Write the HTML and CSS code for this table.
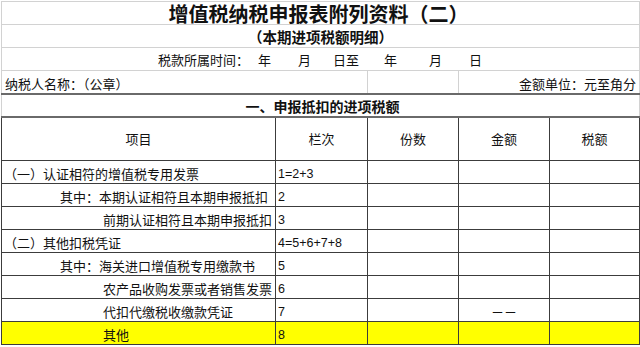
FILE: index.html
```html
<!DOCTYPE html>
<html lang="zh-CN">
<head>
<meta charset="utf-8">
<title>增值税纳税申报表附列资料（二）</title>
<link rel="stylesheet" href="styles.css">
</head>
<body>
<table class="sheet">
  <colgroup>
    <col class="c1"><col class="c2"><col class="c3"><col class="c4"><col class="c5">
  </colgroup>
  <tr class="top title"><td colspan="5">增值税纳税申报表附列资料（二）</td></tr>
  <tr class="top sub"><td colspan="5">（本期进项税额明细）</td></tr>
  <tr class="top period">
    <td colspan="5">
      <div class="period-line">
        <span class="p-label">税款所属时间：</span>
        <span class="p-y1">年</span>
        <span class="p-m1">月</span>
        <span class="p-d1">日至</span>
        <span class="p-y2">年</span>
        <span class="p-m2">月</span>
        <span class="p-d2">日</span>
      </div>
    </td>
  </tr>
  <tr class="top meta">
    <td colspan="2" class="left">纳税人名称：（公章）</td>
    <td></td>
    <td colspan="2" class="right">金额单位：元至角分</td>
  </tr>
  <tr class="section"><td colspan="5">一、申报抵扣的进项税额</td></tr>
  <tr class="head">
    <td>项目</td><td>栏次</td><td>份数</td><td>金额</td><td>税额</td>
  </tr>
  <tr class="row">
    <td class="item l1">（一）认证相符的增值税专用发票</td><td class="num">1=2+3</td><td></td><td></td><td></td>
  </tr>
  <tr class="row">
    <td class="item l2">其中：本期认证相符且本期申报抵扣</td><td class="num">2</td><td></td><td></td><td></td>
  </tr>
  <tr class="row">
    <td class="item l3">前期认证相符且本期申报抵扣</td><td class="num">3</td><td></td><td></td><td></td>
  </tr>
  <tr class="row">
    <td class="item l1">（二）其他扣税凭证</td><td class="num">4=5+6+7+8</td><td></td><td></td><td></td>
  </tr>
  <tr class="row">
    <td class="item l2">其中：海关进口增值税专用缴款书</td><td class="num">5</td><td></td><td></td><td></td>
  </tr>
  <tr class="row">
    <td class="item l3">农产品收购发票或者销售发票</td><td class="num">6</td><td></td><td></td><td></td>
  </tr>
  <tr class="row">
    <td class="item l3">代扣代缴税收缴款凭证</td><td class="num">7</td><td></td><td class="dash">－－</td><td></td>
  </tr>
  <tr class="row hl">
    <td class="item l3">其他</td><td class="num">8</td><td></td><td></td><td></td>
  </tr>
</table>
</body>
</html>
```

FILE: styles.css
```css
html, body {
  margin: 0;
  padding: 0;
  background: #ffffff;
}

body {
  padding: 1px 0 0 1px;
  font-family: "Noto Sans CJK SC", "Noto Sans", sans-serif;
  color: #111;
}

.sheet {
  border-collapse: collapse;
  table-layout: fixed;
  width: 638px;
}

.c1 { width: 274px; }
.c2 { width: 92px; }
.c3 { width: 91px; }
.c4 { width: 91px; }
.c5 { width: 90px; }

.sheet td {
  padding: 0;
  line-height: 13px;
  white-space: nowrap;
  overflow: hidden;
  vertical-align: middle;
}

/* upper sheet area with light gridlines */
.top {
  height: 23px;
}

.top td {
  border: 1px solid #d2d2d2;
  font-size: 13px;
}

.title td {
  text-align: center;
  font-size: 20px;
  line-height: 21px;
  font-weight: bold;
  padding-top: 1px;
  padding-right: 4px;
  overflow: visible;
}

.sub td {
  text-align: center;
  font-size: 14.5px;
  line-height: 16px;
  font-weight: bold;
  padding-top: 2px;
  overflow: visible;
}

.period-line {
  display: flex;
  padding-left: 156px;
  padding-top: 1px;
}

.p-y1 { margin-left: 9px; }
.p-m1 { margin-left: 27px; }
.p-d1 { margin-left: 22px; }
.p-y2 { margin-left: 25px; }
.p-m2 { margin-left: 32px; }
.p-d2 { margin-left: 27px; }

.meta td {
  padding-top: 4px;
}

.meta .left {
  padding-left: 3px;
}

.meta .right {
  text-align: right;
  padding-right: 3px;
}

.section {
  height: 23px;
}

.section td {
  border-top: 2px solid #6a6a6a;
  border-bottom: 2px solid #6a6a6a;
  border-left: 1px solid #d2d2d2;
  border-right: 1px solid #d2d2d2;
  text-align: center;
  font-size: 14px;
  line-height: 15px;
  font-weight: bold;
  padding-top: 2px;
  padding-left: 4px;
}

.head {
  height: 44px;
}

.head td {
  border: 1px solid #3c3c3c;
  border-top: 2px solid #6a6a6a;
  text-align: center;
  font-size: 13px;
}

.row {
  height: 23px;
}

.row td {
  border: 1px solid #3c3c3c;
  font-size: 13px;
  padding-top: 2px;
}

.row .item.l1 { padding-left: 2px; }
.row .item.l2 { padding-left: 58px; }
.row .item.l3 { padding-left: 101px; }

.row .num {
  font-family: "Liberation Sans", Arial, sans-serif;
  font-size: 12.5px;
  padding-left: 2px;
  padding-top: 4px;
}

.row .dash {
  text-align: center;
  font-size: 13px;
  padding-top: 3px;
}

.row.hl td {
  background: #ffff00;
}
```
